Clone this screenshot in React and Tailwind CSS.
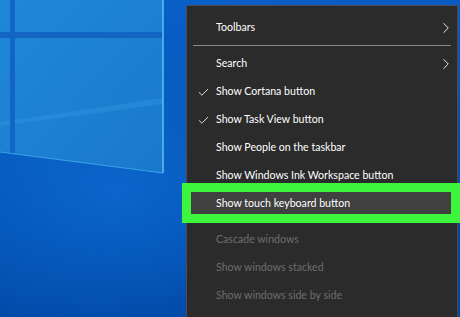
import { Check, ChevronRight } from "lucide-react";

const items = [
   { label: "Toolbars", sub: true },
   { sep: true },
   { label: "Search", sub: true },
   { label: "Show Cortana button", checked: true },
   { label: "Show Task View button", checked: true },
   { label: "Show People on the taskbar" },
   { label: "Show Windows Ink Workspace button" },
   { label: "Show touch keyboard button", active: true },
   { sep: true },
   { label: "Cascade windows", disabled: true },
   { label: "Show windows stacked", disabled: true },
   { label: "Show windows side by side", disabled: true },
   { label: "Show the desktop" },
];

function Wallpaper() {
   return (
      <svg className="absolute inset-0" width="460" height="317" viewBox="0 0 460 317">
         <defs>
            <linearGradient id="bg" x1="0" y1="0" x2="0.3" y2="1">
               <stop offset="0" stopColor="#0a63cc" />
               <stop offset="0.55" stopColor="#0453b6" />
               <stop offset="1" stopColor="#0047a4" />
            </linearGradient>
            <linearGradient id="pane" x1="0" y1="0" x2="1" y2="1">
               <stop offset="0" stopColor="#2088d8" />
               <stop offset="1" stopColor="#1a78cc" />
            </linearGradient>
            <radialGradient id="glow" cx="0.25" cy="0.6" r="0.5">
               <stop offset="0" stopColor="#0d6ad0" stopOpacity="0.8" />
               <stop offset="1" stopColor="#0d6ad0" stopOpacity="0" />
            </radialGradient>
         </defs>
         <rect width="460" height="317" fill="url(#bg)" />
         <rect width="460" height="317" fill="url(#glow)" />
         <polygon points="0,0 163,0 163,173 0,152" fill="url(#pane)" />
         <polygon points="0,122 163,98 163,104 0,126" fill="#3196e0" opacity="0.45" />
         <rect x="10" y="0" width="5" height="153" fill="#1265c2" />
         <rect x="0" y="32" width="163" height="6" fill="#1265c2" />
         <line x1="163" y1="0" x2="163" y2="173" stroke="#5cc0f2" strokeWidth="1.5" />
         <line x1="0" y1="152" x2="163" y2="173" stroke="#3aa2e6" strokeWidth="1" />
      </svg>
   );
}

export default function App() {
   return (
      <div className="relative w-[460px] h-[317px] overflow-hidden bg-[#0453b6]">
         <Wallpaper />
         <div
            className="absolute left-[186px] top-[5px] w-[272px] bg-[#2b2b2b] border border-[#4b4b55] pt-[7px] text-[10.6px] text-white"
            style={{ fontFamily: "Lato, 'Liberation Sans', sans-serif" }}
         >
            {items.map((item, i) =>
               item.sep ? (
                  <div key={i} className="h-[8px] flex items-center px-[6px]">
                     <div className="h-px w-full bg-[#8a8a8a]" />
                  </div>
               ) : (
                  <div
                     key={i}
                     className={
                        "h-[28px] flex items-center pl-[29px] pr-[2px] pt-[2px] relative " +
                        (item.active ? "bg-[#404040] " : "") +
                        (item.disabled ? "text-[#6e6e6e]" : "text-white")
                     }
                  >
                     {item.checked && (
                        <Check size={13} strokeWidth={1.5} className="absolute left-[10px] top-[9px]" />
                     )}
                     <span className="flex-1">{item.label}</span>
                     {item.sub && <ChevronRight size={18} strokeWidth={1.2} />}
                  </div>
               )
            )}
         </div>
         <div className="absolute left-[182px] top-[183px] w-[278px] h-[40px] border-[9px] border-[#3cf53c]" />
      </div>
   );
}
